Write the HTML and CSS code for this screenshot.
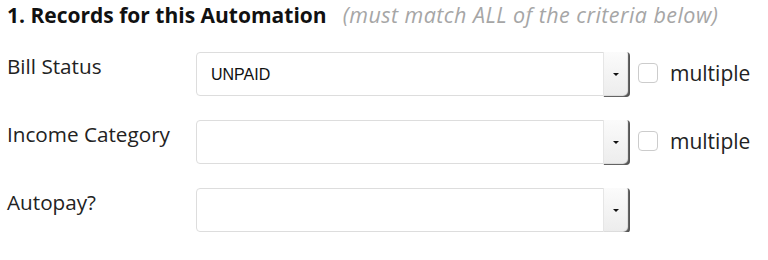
FILE: index.html
```html
<!DOCTYPE html>
<html>
<head>
<meta charset="utf-8">
<link rel="stylesheet" href="styles.css">
</head>
<body>
<div class="panel">
  <h2 class="title"><span class="title-text">1. Records for this Automation</span><span class="hint">(must match ALL of the criteria below)</span></h2>
  <div class="rows">
    <div class="row">
      <div class="label">Bill Status</div>
      <div class="select">
        <div class="value">UNPAID</div>
        <div class="btn"><span class="arrow"></span></div>
      </div>
      <label class="multi"><span class="check"></span><span class="multi-text">multiple</span></label>
    </div>
    <div class="row">
      <div class="label">Income Category</div>
      <div class="select">
        <div class="value"></div>
        <div class="btn"><span class="arrow"></span></div>
      </div>
      <label class="multi"><span class="check"></span><span class="multi-text">multiple</span></label>
    </div>
    <div class="row">
      <div class="label">Autopay?</div>
      <div class="select">
        <div class="value"></div>
        <div class="btn"><span class="arrow"></span></div>
      </div>
    </div>
  </div>
</div>
</body>
</html>
```
FILE: styles.css
```css
html, body {
  margin: 0;
  padding: 0;
  background: #fff;
}
body {
  font-family: "Open Sans", "DejaVu Sans", sans-serif;
  color: #222;
}
.panel {
  padding: 0 0 0 7px;
}
.title {
  margin: 0;
  display: flex;
  align-items: baseline;
  gap: 16px;
  font-size: 21px;
  font-weight: 700;
  color: #111;
  white-space: nowrap;
}
.title-text {
  line-height: 28px;
}
.hint {
  font-weight: 400;
  font-style: italic;
  font-size: 21.5px;
  letter-spacing: 0.45px;
  line-height: 30px;
  color: #a6a6a6;
}
.rows {
  margin-top: 22px;
  display: flex;
  flex-direction: column;
  gap: 24px;
}
.row {
  display: flex;
  align-items: center;
  height: 44px;
}
.label {
  width: 189px;
  align-self: flex-start;
  font-size: 20.7px;
  line-height: 29px;
  color: #222;
}
.select {
  width: 430px;
  height: 42px;
  border: 1px solid #ddd;
  border-radius: 4px;
  display: flex;
  background: #fff;
}
.value {
  flex: 1;
  padding-left: 14px;
  font-family: "Liberation Sans", Arial, sans-serif;
  font-size: 16px;
  line-height: 44px;
  color: #111;
}
.btn {
  width: 26px;
  margin: -1px -3px -2px 0;
  border-left: 1px solid #e6e6e6;
  border-radius: 0 4px 4px 0;
  background: linear-gradient(#fbfbfb, #ececec);
  box-shadow: inset -3px -2px 1px -1px #555;
  display: flex;
  align-items: center;
  justify-content: center;
}
.arrow {
  width: 0;
  height: 0;
  border-left: 3px solid transparent;
  border-right: 3px solid transparent;
  border-top: 3px solid #111;
  margin-right: 2px;
}
.multi {
  display: flex;
  align-items: center;
  margin-left: 10px;
}
.check {
  width: 18px;
  height: 18px;
  border: 1px solid #ccc;
  border-radius: 4px;
  background: #fff;
  margin-top: -3px;
}
.multi-text {
  margin-left: 12px;
  font-size: 21px;
  line-height: 28px;
  color: #222;
  margin-top: -3px;
}
```
